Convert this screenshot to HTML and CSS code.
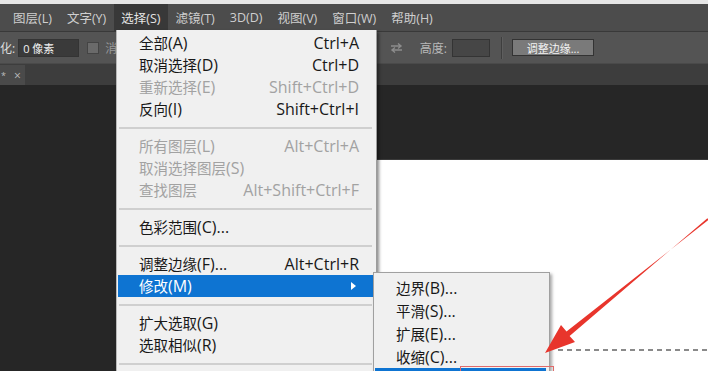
FILE: index.html
```html
<!DOCTYPE html>
<html lang="zh-CN">
<head>
<meta charset="utf-8">
<title>选择菜单 - 修改</title>
<link rel="stylesheet" href="styles.css">
</head>
<body>
<div class="app">
  <div class="topstrip"></div>
  <nav class="menubar">
    <span class="mb-item">图层(L)</span>
    <span class="mb-item">文字(Y)</span>
    <span class="mb-item active">选择(S)</span>
    <span class="mb-item">滤镜(T)</span>
    <span class="mb-item">3D(D)</span>
    <span class="mb-item">视图(V)</span>
    <span class="mb-item">窗口(W)</span>
    <span class="mb-item">帮助(H)</span>
  </nav>
  <div class="options">
    <span class="opt-label cut">化:</span>
    <span class="opt-input wide">0 像素</span>
    <span class="opt-check"></span>
    <span class="opt-label hidden-part">消</span>
    <div class="opt-right">
      <svg class="swap" width="13" height="10" viewBox="0 0 13 10">
        <path d="M1 3 H11 M8 0.5 L11 3 L8 5.5" fill="none" stroke="#8c8c8c" stroke-width="1.4"/>
        <path d="M12 7 H2 M5 4.5 L2 7 L5 9.5" fill="none" stroke="#8c8c8c" stroke-width="1.4"/>
      </svg>
      <span class="opt-label dim">高度:</span>
      <span class="opt-input small"></span>
      <span class="opt-sep"></span>
      <span class="opt-button">调整边缘...</span>
    </div>
  </div>
  <div class="tabs"><div class="tab"><span class="tab-star">*</span><span class="tab-close">×</span></div></div>
  <div class="workspace">
    <div class="canvas"><div class="marquee"></div></div>
  </div>
</div>

<div class="menu">
  <div class="menu-item"><span><span class="zh">全部</span>(A)</span><span>Ctrl+A</span></div>
  <div class="menu-item"><span><span class="zh">取消选择</span>(D)</span><span>Ctrl+D</span></div>
  <div class="menu-item disabled"><span><span class="zh">重新选择</span>(E)</span><span>Shift+Ctrl+D</span></div>
  <div class="menu-item"><span><span class="zh">反向</span>(I)</span><span>Shift+Ctrl+I</span></div>
  <div class="sep"></div>
  <div class="menu-item disabled"><span><span class="zh">所有图层</span>(L)</span><span>Alt+Ctrl+A</span></div>
  <div class="menu-item disabled"><span><span class="zh">取消选择图层</span>(S)</span><span></span></div>
  <div class="menu-item disabled"><span><span class="zh">查找图层</span></span><span>Alt+Shift+Ctrl+F</span></div>
  <div class="sep"></div>
  <div class="menu-item"><span><span class="zh">色彩范围</span>(C)...</span><span></span></div>
  <div class="sep"></div>
  <div class="menu-item"><span><span class="zh">调整边缘</span>(F)...</span><span>Alt+Ctrl+R</span></div>
  <div class="menu-item hl"><span><span class="zh">修改</span>(M)</span><span class="caret"></span></div>
  <div class="sep"></div>
  <div class="menu-item"><span><span class="zh">扩大选取</span>(G)</span><span></span></div>
  <div class="menu-item"><span><span class="zh">选取相似</span>(R)</span><span></span></div>
  <div class="sep"></div>
</div>

<div class="submenu">
  <div class="sub-item"><span class="zh">边界</span>(B)...</div>
  <div class="sub-item"><span class="zh">平滑</span>(S)...</div>
  <div class="sub-item"><span class="zh">扩展</span>(E)...</div>
  <div class="sub-item"><span class="zh">收缩</span>(C)...</div>
  <div class="sub-item hl"></div>
</div>

<div class="mark-box"></div>

<svg class="arrow" width="708" height="371" viewBox="0 0 708 371">
  <polygon points="545,353 561,325 566.5,331.5 708.6,219.8 707.4,218.2 569.6,336 575,342" fill="#e8352c"/>
</svg>
</body>
</html>
```

FILE: styles.css
```css
html, body {
  margin: 0;
  padding: 0;
}

body {
  width: 708px;
  height: 371px;
  overflow: hidden;
  position: relative;
  font-family: "Open Sans", "Noto Sans CJK SC", sans-serif;
  background: #262626;
}

.app {
  display: flex;
  flex-direction: column;
  width: 708px;
  height: 371px;
}

.topstrip {
  height: 4px;
  background: #e6e6e6;
}

.menubar {
  height: 27px;
  background: #4c4c4c;
  display: flex;
  align-items: stretch;
  padding-left: 6px;
  border-bottom: 1px solid #393939;
}

.mb-item {
  display: flex;
  align-items: center;
  padding: 0 7px;
  margin-right: 1px;
  font-size: 12.5px;
  color: #cfcfcf;
  white-space: nowrap;
}

.mb-item.active {
  background: #383838;
  color: #e4e4e4;
}

.options {
  height: 31px;
  background: #545454;
  display: flex;
  align-items: center;
  font-size: 11px;
  color: #dcdcdc;
  border-bottom: 1px solid #4a4a4a;
}

.opt-label {
  white-space: nowrap;
}

.opt-label.cut {
  font-size: 12px;
}

.opt-label.hidden-part {
  color: #9a9a9a;
  font-size: 12px;
}

.opt-label.dim {
  color: #b9b9b9;
  font-size: 12px;
  margin-left: 17px;
}

.opt-input {
  display: flex;
  align-items: center;
  height: 18px;
  box-sizing: border-box;
  background: #3a3a3a;
  border: 1px solid #343434;
  color: #f0f0f0;
}

.opt-input.wide {
  width: 61px;
  margin-left: 3px;
  padding-left: 4px;
}

.opt-input.small {
  width: 38px;
  margin-left: 5px;
  background: #464646;
}

.opt-check {
  width: 12px;
  height: 12px;
  margin: 0 6px 0 8px;
  background: #6a6a6a;
  border: 1px solid #444;
  box-sizing: border-box;
}

.opt-right {
  margin-left: auto;
  display: flex;
  align-items: center;
  padding-right: 114px;
}

.opt-sep {
  width: 1px;
  height: 22px;
  margin-left: 11px;
  background: #3e3e3e;
  box-shadow: 1px 0 0 #5e5e5e;
}

.opt-button {
  margin-left: 10px;
  width: 82px;
  height: 17px;
  box-sizing: border-box;
  background: #7a7a7a;
  border: 1px solid #333;
  color: #f4f4f4;
  font-size: 11px;
  display: flex;
  align-items: center;
  justify-content: center;
}

.tabs {
  height: 21px;
  background: #3d3d3d;
  display: flex;
  align-items: flex-end;
}

.tab {
  width: 25px;
  height: 20px;
  background: #4a4a4a;
  display: flex;
  align-items: center;
  font-size: 11px;
  color: #bdbdbd;
}

.tab-star {
  margin-left: 1px;
  font-size: 9px;
}

.tab-close {
  margin-left: 8px;
  font-size: 12px;
}

.workspace {
  flex: 1;
  background: #262626;
  display: flex;
  flex-direction: column;
}

.canvas {
  margin-top: 74px;
  margin-left: 300px;
  flex: 1;
  background: #ffffff;
  border-top: 1px solid #3a3a3a;
  position: relative;
}

.marquee {
  position: absolute;
  top: 189px;
  left: 258px;
  right: 0;
  height: 2px;
  background: repeating-linear-gradient(90deg, #8a8a8a 0 5px, transparent 5px 9px);
}

/* main dropdown */
.menu {
  position: absolute;
  left: 116px;
  top: 30px;
  width: 261px;
  box-sizing: border-box;
  padding-top: 2px;
  background: #f0f0f0;
  border-left: 1px solid #b8b8b8;
  border-right: 1px solid #9c9c9c;
  box-shadow: 2px 2px 3px rgba(0, 0, 0, 0.45);
  font-size: 16px;
  color: #181818;
}

.zh {
  font-family: "Noto Sans CJK SC", sans-serif;
  font-size: 14.5px;
}

.menu-item {
  height: 22px;
  display: flex;
  align-items: center;
  justify-content: space-between;
  padding: 0 17px 0 22px;
  white-space: nowrap;
}

.menu-item.disabled {
  color: #a2a2a2;
}

.menu-item.hl {
  background: #0e74d2;
  color: #ffffff;
  margin: 0 3px 0 1px;
  padding: 0 14px 0 21px;
}

.caret {
  width: 0;
  height: 0;
  border-top: 4px solid transparent;
  border-bottom: 4px solid transparent;
  border-left: 5px solid #ffffff;
  margin-right: 3px;
}

.sep {
  height: 15px;
  display: flex;
  align-items: center;
  padding: 0 4px 0 2px;
}

.sep::after {
  content: "";
  flex: 1;
  height: 2px;
  background: #cfcfcf;
}

/* submenu */
.submenu {
  position: absolute;
  left: 373px;
  top: 272px;
  width: 177px;
  box-sizing: border-box;
  padding-top: 3px;
  background: #f0f0f0;
  border: 1px solid #a0a0a0;
  box-shadow: 2px 2px 3px rgba(0, 0, 0, 0.35);
  font-size: 16px;
  color: #181818;
}

.sub-item {
  height: 23px;
  display: flex;
  align-items: center;
  padding-left: 22px;
  white-space: nowrap;
}

.sub-item.hl {
  background: #0e74d2;
  color: #ffffff;
  margin: 0 3px 0 1px;
  padding-left: 21px;
}

.mark-box {
  position: absolute;
  left: 460px;
  top: 366px;
  width: 92px;
  height: 20px;
  border: 1px solid #e06a6a;
}

.arrow {
  position: absolute;
  left: 0;
  top: 0;
  pointer-events: none;
}
```
